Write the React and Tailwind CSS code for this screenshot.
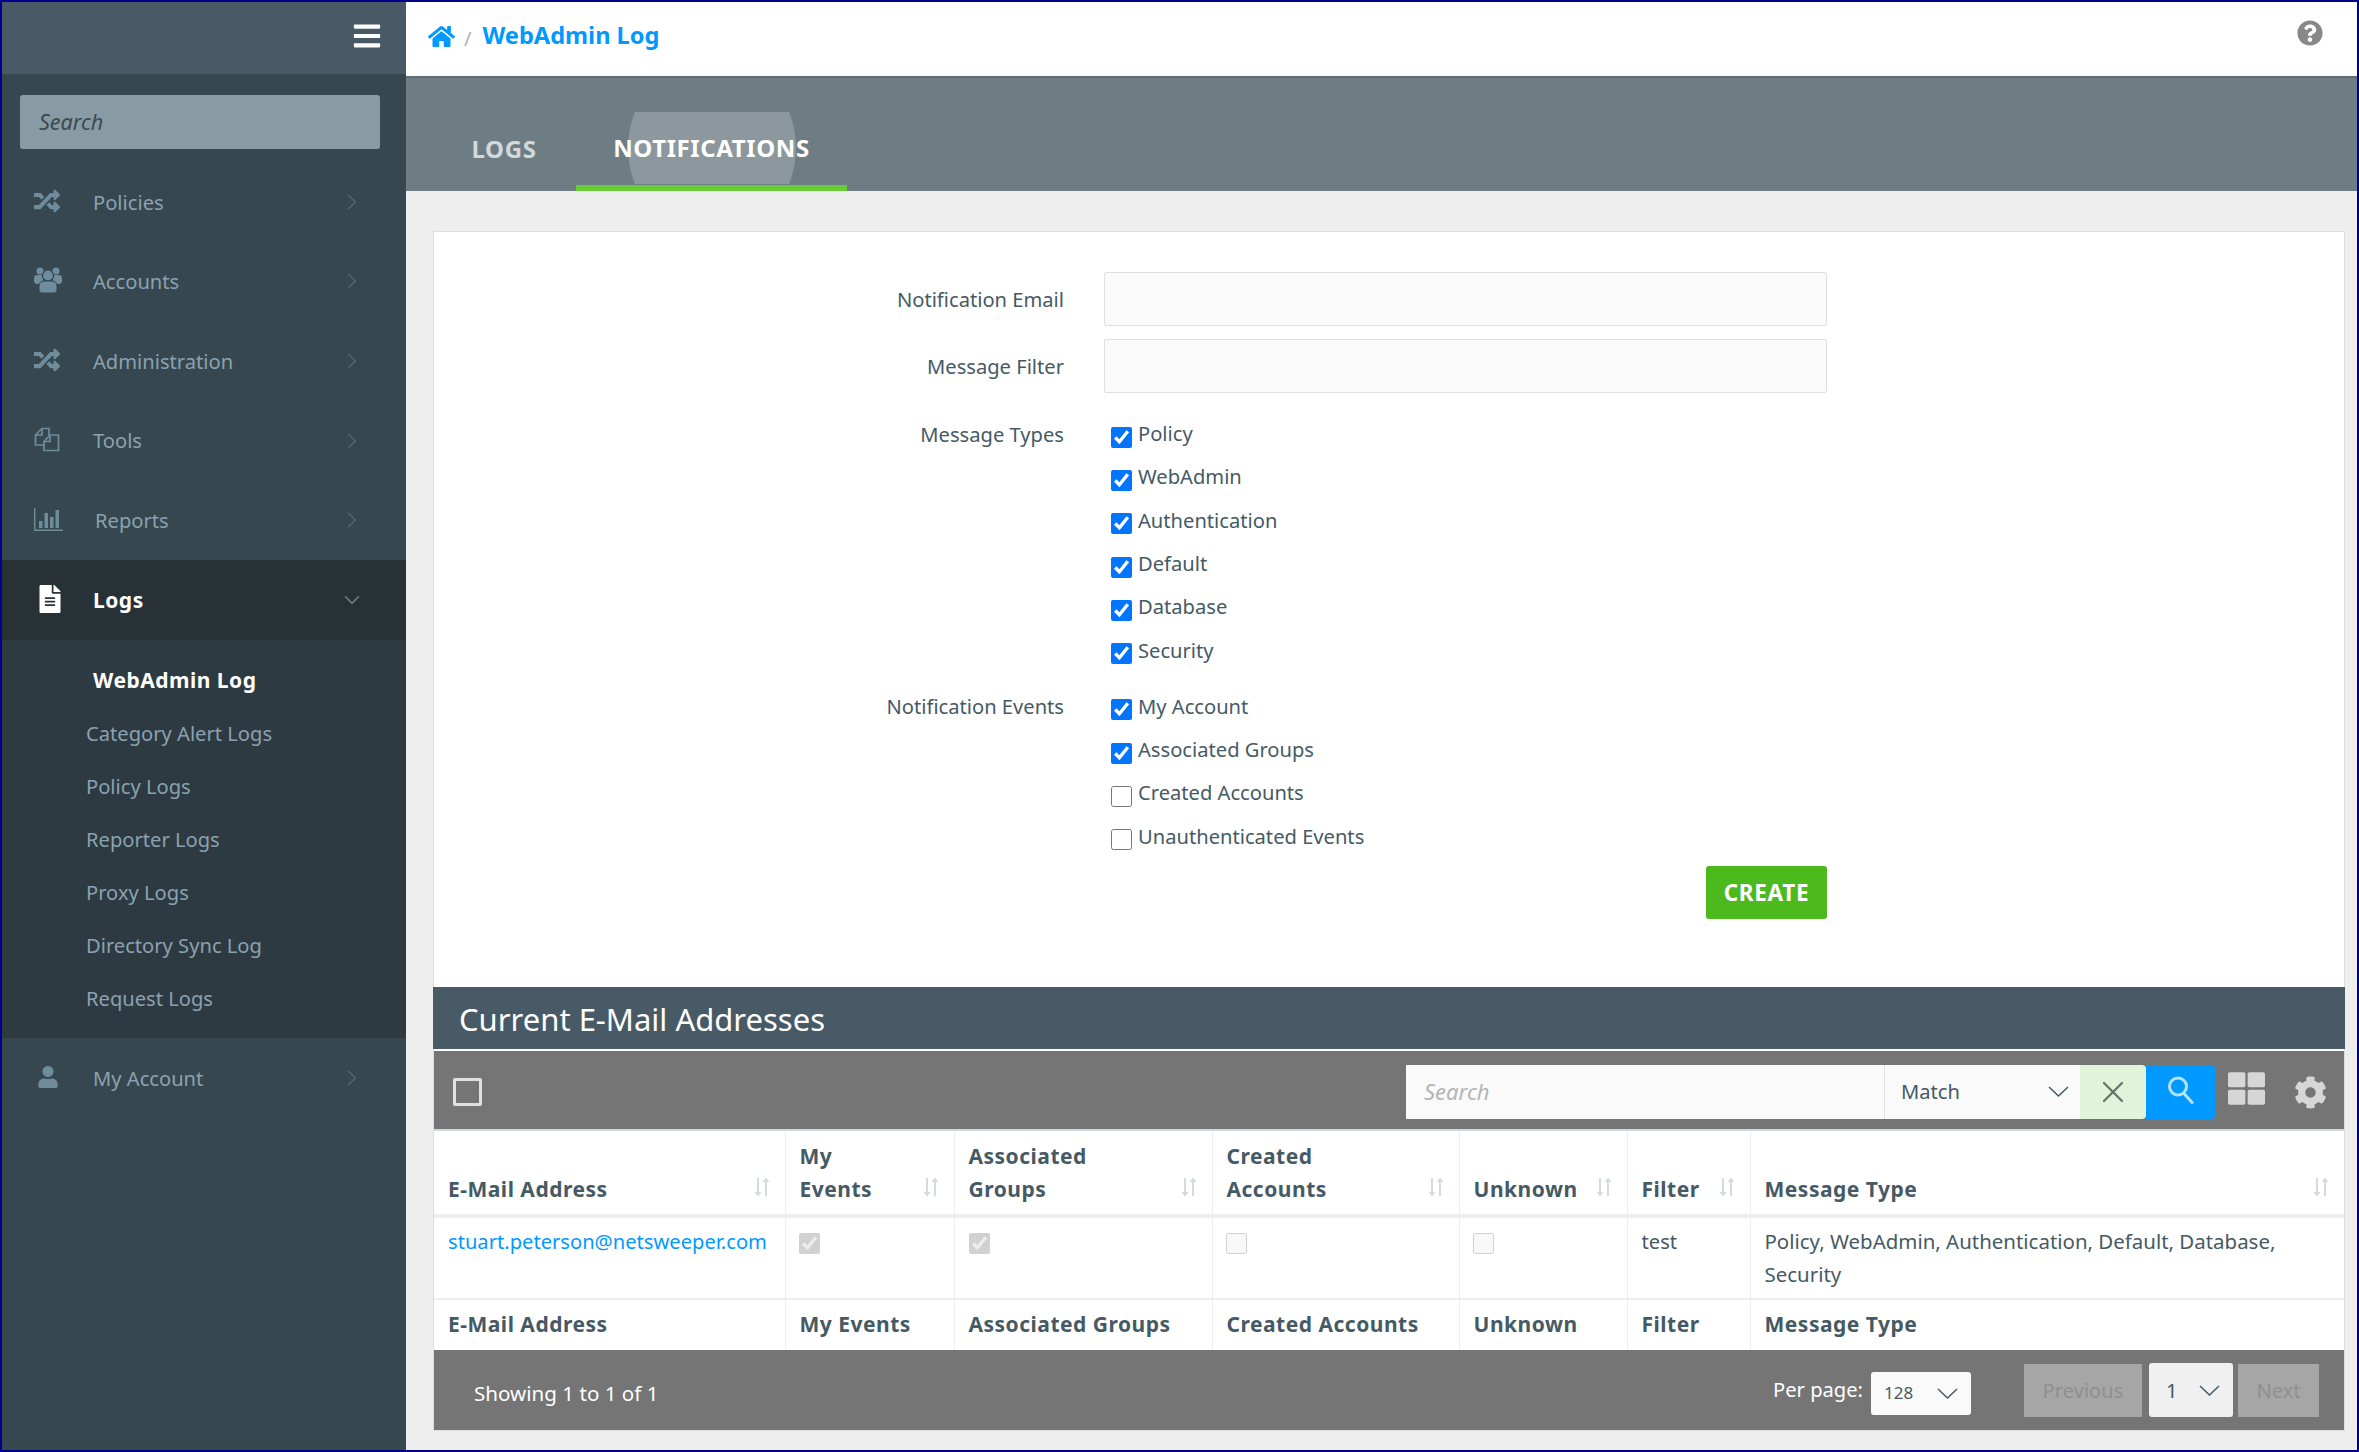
import { ChevronRight, ChevronDown, X } from 'lucide-react';
import { FaRandom, FaUser, FaFileAlt, FaBars, FaHome, FaQuestionCircle, FaThLarge, FaCog } from 'react-icons/fa';

const UsersIcon = () => (
  <svg width="28" height="26" viewBox="0 0 28 26" fill="currentColor">
    <circle cx="6" cy="4" r="3.6" />
    <circle cx="22" cy="4" r="3.6" />
    <path d="M0 11c0-2 1.500-3 3-3h6v9H3c-1.500 0-3-1-3-3z" />
    <path d="M28 11c0-2-1.500-3-3-3h-6v9h6c1.500 0 3-1 3-3z" />
    <circle cx="14" cy="8.500" r="5.500" stroke="#37474f" strokeWidth="1.200" />
    <path d="M5 19c0-3 2-5 5-5h8c3 0 5 2 5 5v4c0 2-1.500 3-3 3H8c-1.500 0-3-1-3-3z" stroke="#37474f" strokeWidth="1" />
  </svg>
);

const FilesIcon = () => (
  <svg width="26" height="25" viewBox="0 0 26 25" fill="none" stroke="currentColor" strokeWidth="1.700">
    <path d="M9.500 18H1.500V8L8 1.500h7V8" />
    <path d="M16 8h8.500v15.500H10V14.500z" />
    <path d="M16 8v6.500h-6" />
    <path d="M8 1.500V8H1.500" />
  </svg>
);

const BarsIcon = () => (
  <svg width="29" height="23" viewBox="0 0 29 23" fill="currentColor">
    <path d="M0 0h1.400v21.600H29V23H0z" />
    <rect x="5" y="13" width="3.500" height="7" />
    <rect x="10.500" y="5" width="3.500" height="15" />
    <rect x="16" y="9" width="3.500" height="11" />
    <rect x="21.500" y="2" width="3.500" height="18" />
  </svg>
);

const SearchIcon = () => (
  <svg width="28" height="29" viewBox="0 0 28 29" fill="none" stroke="#b5e2ff" strokeWidth="3" className="-mt-[4px]">
    <circle cx="11" cy="10.500" r="8.500" />
    <path d="M16.500 17L26 27.500" />
  </svg>
);

const NAV_TOP = [
  { label: 'Policies', icon: <FaRandom size={26} /> },
  { label: 'Accounts', icon: <UsersIcon /> },
  { label: 'Administration', icon: <FaRandom size={26} /> },
  { label: 'Tools', icon: <FilesIcon /> },
  { label: 'Reports', icon: <BarsIcon />, shift: true },
];

const SUB_ITEMS = ['Category Alert Logs', 'Policy Logs', 'Reporter Logs', 'Proxy Logs', 'Directory Sync Log', 'Request Logs'];

const MESSAGE_TYPES = ['Policy', 'WebAdmin', 'Authentication', 'Default', 'Database', 'Security'];
const EVENTS = [
  { label: 'My Account', checked: true },
  { label: 'Associated Groups', checked: true },
  { label: 'Created Accounts', checked: false },
  { label: 'Unauthenticated Events', checked: false },
];

const COLUMNS = [
  { label: ['E-Mail Address'], width: 'w-[351px]' },
  { label: ['My', 'Events'], foot: 'My Events', width: 'w-[169px]' },
  { label: ['Associated', 'Groups'], foot: 'Associated Groups', width: 'w-[258px]' },
  { label: ['Created', 'Accounts'], foot: 'Created Accounts', width: 'w-[247px]' },
  { label: ['Unknown'], width: 'w-[168px]' },
  { label: ['Filter'], width: 'w-[123px]' },
  { label: ['Message Type'], width: '' },
];

const Caret = ({ className = '' }) => (
  <svg width="21" height="11" viewBox="0 0 21 11" fill="none" stroke="currentColor" strokeWidth="1.5" className={className}>
    <polyline points="1,1 10.5,10 20,1" />
  </svg>
);

const SortIcon = () => (
  <svg width="16" height="20" viewBox="0 0 16 20" fill="#d5dadd" className="shrink-0">
    <path d="M3 1h2v14h2.5L4 19.5.5 15H3z" />
    <path d="M11 19h2V5h2.5L12 .5 8.5 5H11z" />
  </svg>
);

const NavRow = ({ label, icon, shift }) => (
  <div className="h-[79.6px] flex items-center pl-[31px] pr-[41px] text-[#8aa2af]">
    <span className="w-[60px] flex justify-start pl-[1px] -mt-[2px] text-[#6f8c9d]">{icon}</span>
    <span className={`flex-1 ${shift ? 'ml-[2px]' : ''}`}>{label}</span>
    <ChevronRight size={26} strokeWidth={1.4} className="text-[#55666f]" />
  </div>
);

const Sidebar = () => (
  <aside className="w-[404px] shrink-0 bg-[#37474f] flex flex-col">
    <div className="h-[72px] bg-[#485a65] flex items-center justify-end pr-[24px] pb-[4px] text-white">
      <FaBars size={30} />
    </div>
    <div className="pl-[18px] pr-[26px] pt-[21px] pb-[13px]">
      <div className="h-[54px] bg-[#889ba4] rounded-[3px] flex items-center pl-[19px] italic text-[#3c4a52] text-[21.5px]">Search</div>
    </div>
    {NAV_TOP.map(item => <NavRow key={item.label} {...item} />)}
    <div className="h-[80px] bg-[#283136] flex items-center pl-[31px] pr-[41px] text-white font-bold">
      <span className="w-[60px] flex pl-[3px] -mt-[2px]"><FaFileAlt size={28} /></span>
      <span className="flex-1 text-[21px] tracking-[0.5px] pt-[1px]">Logs</span>
      <ChevronDown size={26} strokeWidth={1.4} className="text-[#71828b]" />
    </div>
    <div className="h-[398px] bg-[#2e3a42] pt-[14px] text-[#8aa2af]">
      <div className="h-[53px] flex items-center pl-[91px] text-white font-bold text-[21px] tracking-[0.5px]">WebAdmin Log</div>
      {SUB_ITEMS.map(item => (
        <div key={item} className="h-[53px] flex items-center pl-[84px]">{item}</div>
      ))}
    </div>
    <NavRow label="My Account" icon={<span className="pl-[3px] flex"><FaUser size={22} /></span>} />
  </aside>
);

const Tabs = () => (
  <div className="h-[113px] bg-[#6e7d84] flex pl-[30px] font-bold text-[24px] tracking-[0.6px] shrink-0">
    <div className="w-[136px] flex items-center justify-center pt-[29px] text-[#d3d8da]">LOGS</div>
    <div className="relative w-[271px] ml-[4px] flex items-center justify-center pt-[32px] text-white border-b-[6px] border-[#66cc33]">
      <div className="absolute left-[52px] top-[34px] w-[168px] h-[72px] overflow-hidden">
        <div className="w-[168px] h-[180px] -mt-[54px] rounded-[50%] bg-[#8c989e]"></div>
      </div>
      <span className="relative">NOTIFICATIONS</span>
    </div>
  </div>
);

const CheckRow = ({ label, checked }) => (
  <label className="h-[43.3px] flex items-center text-[#455a64] pb-[1px]">
    <input type="checkbox" readOnly checked={checked} className="w-[21px] h-[21px] ml-[7px] mt-[8px] mr-[6px] accent-[#0075ff]" />
    {label}
  </label>
);

const TextField = ({ label }) => (
  <>
    <div className="h-[54px] flex items-center justify-end text-[#455a64]">{label}</div>
    <div className="h-[54px] bg-[#fafafa] border border-[#e0e0e0] rounded-[2px] mb-[13px]"></div>
  </>
);

const NotificationForm = () => (
  <div className="h-[755px] pt-[40px] shrink-0 text-[20.15px]">
    <div className="grid grid-cols-[630px_723px] gap-x-[40px]">
      <TextField label="Notification Email" />
      <TextField label="Message Filter" />
      <div className="h-[43.3px] mt-[6px] flex items-center justify-end text-[#455a64]">Message Types</div>
      <div className="mt-[6px] mb-[13px]">
        {MESSAGE_TYPES.map(t => <CheckRow key={t} label={t} checked />)}
      </div>
      <div className="h-[43.3px] flex items-center justify-end text-[#455a64]">Notification Events</div>
      <div>
        {EVENTS.map(e => <CheckRow key={e.label} {...e} />)}
      </div>
      <div></div>
      <div className="flex justify-end mt-[8px]">
        <button className="w-[121px] h-[53px] bg-[#4cb91c] rounded-[3px] text-white font-bold text-[22.5px] tracking-[0.7px]">CREATE</button>
      </div>
    </div>
  </div>
);

const Toolbar = () => (
  <div className="h-[78px] mt-[2px] bg-[#757575] flex items-center pl-[19px] pr-[17px]">
    <span className="w-[29px] h-[28px] border-[3px] border-[#e0e0e0] rounded-[2px] mt-[4px]"></span>
    <div className="ml-auto flex items-center h-[54px] mt-[4px]">
      <div className="w-[479px] h-full bg-[#fafafa] flex items-center pl-[18px] pb-[2px] italic text-[#b5b5b5] text-[22px] border-r border-[#e0e0e0]">Search</div>
      <div className="w-[195px] h-full bg-[#fafafa] flex items-center justify-between pl-[16px] pr-[11px] pb-[1px] text-[#455a64]">
        Match
        <Caret />
      </div>
      <div className="w-[66px] h-full bg-[#e0f4da] rounded-r-[4px] flex items-center justify-center text-[#66756c]">
        <X size={36} strokeWidth={1.5} />
      </div>
      <div className="w-[69px] h-full bg-[#0099ff] rounded-r-[4px] flex items-center justify-center">
        <SearchIcon />
      </div>
      <FaThLarge size={37} className="ml-[13px] -mt-[8px] text-[#d6d6d6]" />
      <FaCog size={33} className="ml-[29px] text-[#d6d6d6]" />
    </div>
  </div>
);

const EmailTable = () => (
  <table className="w-full table-fixed border-collapse text-[#455a64]">
    <thead>
      <tr className="h-[85px] border-b-[4px] border-[#eeeeee]">
        {COLUMNS.map((c, i) => (
          <th key={i} className={`${c.width} align-bottom font-bold text-[21px] tracking-[0.5px] text-left px-[14px] pb-[8px] leading-[33px] ${i < 6 ? 'border-r border-[#eeeeee]' : ''}`}>
            <div className="flex items-end justify-between">
              <div>{c.label.map(l => <div key={l}>{l}</div>)}</div>
              <div className="pb-[9px] mr-[1px]"><SortIcon /></div>
            </div>
          </th>
        ))}
      </tr>
    </thead>
    <tbody>
      <tr className="h-[83px] border-b-[2px] border-[#eeeeee] align-top leading-[33px]">
        <td className="px-[14px] pt-[7px] border-r border-[#eeeeee] text-[#0099ff] whitespace-nowrap">stuart.peterson@netsweeper.com</td>
        <td className="px-[14px] pt-[15px] border-r border-[#eeeeee]"><input type="checkbox" disabled checked readOnly className="w-[21px] h-[21px] block -ml-[1px]" /></td>
        <td className="px-[14px] pt-[15px] border-r border-[#eeeeee]"><input type="checkbox" disabled checked readOnly className="w-[21px] h-[21px] block" /></td>
        <td className="px-[14px] pt-[15px] border-r border-[#eeeeee]"><input type="checkbox" disabled readOnly className="w-[21px] h-[21px] block -ml-[1px]" /></td>
        <td className="px-[14px] pt-[15px] border-r border-[#eeeeee]"><input type="checkbox" disabled readOnly className="w-[21px] h-[21px] block -ml-[1px]" /></td>
        <td className="px-[14px] pt-[7px] border-r border-[#eeeeee]">test</td>
        <td className="px-[14px] pt-[7px] text-[20.45px]">Policy, WebAdmin, Authentication, Default, Database, Security</td>
      </tr>
    </tbody>
    <tfoot>
      <tr className="h-[51px]">
        {COLUMNS.map((c, i) => (
          <th key={i} className={`font-bold text-[21px] tracking-[0.5px] text-left px-[14px] whitespace-nowrap ${i < 6 ? 'border-r border-[#eeeeee]' : ''}`}>
            {c.foot || c.label[0]}
          </th>
        ))}
      </tr>
    </tfoot>
  </table>
);

const TableFooter = () => (
  <div className="h-[80px] bg-[#757575] flex items-center pl-[40px] pr-[25px] text-white">
    <span className="mt-[6px] text-[20.6px]">Showing 1 to 1 of 1</span>
    <span className="ml-auto pb-[1px]">Per page:</span>
    <div className="w-[100px] h-[43px] ml-[8px] mt-[6px] bg-[#fafafa] rounded-[3px] flex items-center justify-between pl-[13px] pr-[13px] text-[#455a64] text-[17px]">
      128
      <Caret />
    </div>
    <div className="w-[118px] h-[53px] ml-[53px] bg-[#a6a6a6] flex items-center justify-center text-[#8f8f8f]">Previous</div>
    <div className="w-[84px] h-[54px] ml-[7px] bg-[#f0f0f0] rounded-[3px] flex items-center justify-between pl-[17px] pr-[13px] text-[#455a64]">
      1
      <Caret />
    </div>
    <div className="w-[81px] h-[53px] ml-[5px] bg-[#a6a6a6] flex items-center justify-center text-[#8f8f8f]">Next</div>
  </div>
);

export default function App() {
  return (
    <div className="w-screen h-screen overflow-hidden flex border-2 border-[#00008b] bg-[#eeeeee] font-['Noto_Sans',sans-serif] text-[20.15px]">
      <Sidebar />
      <main className="flex-1 flex flex-col min-w-0">
        <header className="h-[76px] shrink-0 bg-white border-b-2 border-[#5f6d74] flex items-center pl-[22px] pr-[34px] pb-[6px]">
          <FaHome size={27} className="text-[#0099ff]" />
          <span className="mx-[9px] text-[#a9b4ba] mt-[4px]">/</span>
          <span className="ml-[2px] text-[#0099ff] font-bold text-[23.6px]">WebAdmin Log</span>
          <FaQuestionCircle size={26} className="ml-auto text-[#888888] -mt-[7px]" />
        </header>
        <Tabs />
        <div className="flex-1 pl-[27px] pr-[12px] pt-[40px]">
          <section className="bg-white border border-[#dddddd]">
            <NotificationForm />
            <div className="h-[62px] -mx-[1px] bg-[#485a65] flex items-center pl-[26px] pt-[2px] text-white text-[31px]">Current E-Mail Addresses</div>
            <Toolbar />
            <div className="h-[2px] bg-[#cfd8dc]"></div>
            <EmailTable />
            <TableFooter />
          </section>
        </div>
      </main>
    </div>
  );
}
